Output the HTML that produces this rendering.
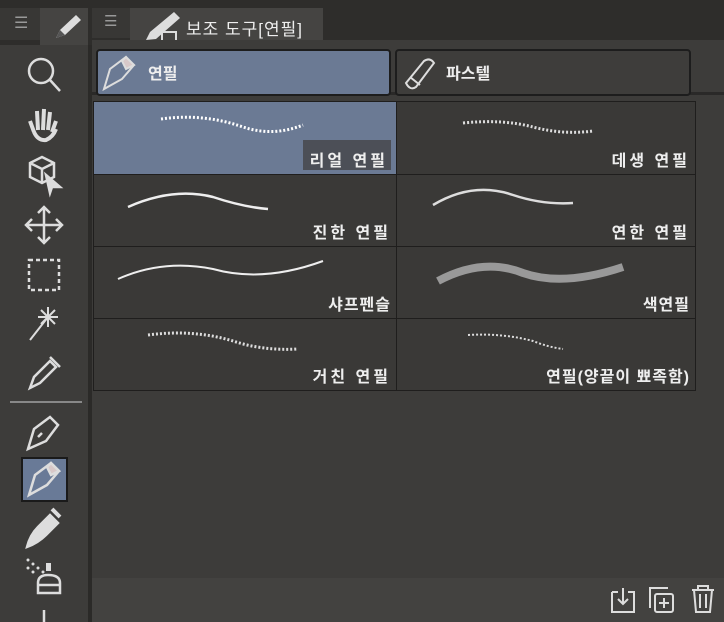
<!DOCTYPE html>
<html><head><meta charset="utf-8"><style>
*{margin:0;padding:0;box-sizing:border-box}
body{width:724px;height:622px;background:#2e2d2b;position:relative;overflow:hidden;font-family:"Liberation Sans","Noto Sans CJK KR",sans-serif;color:#e8e8e8}
.a{position:absolute}
.cell{position:absolute;background:#3a3937;border:1px solid #1f1e1d}
.lbl{position:absolute;right:6px;bottom:4px;font-size:16px;letter-spacing:3px;color:#eee;font-weight:bold}
</style></head><body>
<div class="a" style="left:0;top:8px;width:40px;height:32px;background:#383735"></div>
<div class="a" style="left:14px;top:13px;font-size:16px;color:#999">☰</div>
<div class="a" style="left:40px;top:8px;width:48px;height:37px;background:#454442"></div>
<svg class="a" style="left:52px;top:12px" width="34" height="30"><path d="M4 26 L8 18 L24 3 L29 8 L13 23 Z" fill="#ddd"/><path d="M4 26 L8 18 L13 23 Z" fill="#555"/></svg>
<div class="a" style="left:0;top:45px;width:90px;height:577px;background:#3d3c3a"></div>
<div class="a" style="left:88px;top:45px;width:4px;height:577px;background:#2b2a28"></div>
<svg class="a" style="left:0;top:45px" width="90" height="577" fill="none" stroke="#ddd" stroke-width="2.5">
<circle cx="41" cy="26" r="12"/><path d="M50 35 L60 46"/>
<path d="M34 87 L30 76 M38 85 L37 66 M43 85 L44 64 M48 85 L50 67 M52 87 L56 76 M34 87 Q38 96 46 95 Q53 92 56 84" stroke-width="4"/>
<path d="M30 118 L42 112 L54 118 L54 132 L42 138 L30 132 Z M30 118 L42 124 L54 118 M42 124 L42 138"/><path d="M46 130 L60 142 L52 142 L50 148 Z" fill="#ddd"/>
<path d="M44 162 L44 198 M26 180 L62 180 M38 168 L44 162 L50 168 M38 192 L44 198 L50 192 M32 174 L26 180 L32 186 M56 174 L62 180 L56 186"/>
<rect x="29" y="215" width="30" height="30" stroke-dasharray="4 3"/>
<path d="M30 295 L48 272 M48 262 L48 282 M38 272 L58 272 M41 265 L55 279 M55 265 L41 279" stroke-width="2"/>
<path d="M30 343 L34 332 L50 316 L56 322 L40 338 Z M50 312 L60 322"/>
<path d="M28 404 L34 384 L50 372 L58 380 L46 396 Z M38 392 L42 388"/>
<path d="M27 502 Q30 490 38 482 L50 470 L58 478 L46 490 Q38 498 27 502Z" fill="#ddd"/>
<path d="M52 464 L60 472" stroke-width="4"/>
<g fill="#ddd" stroke="none"><circle cx="28" cy="515" r="1.5"/><circle cx="33" cy="519" r="1.5"/><circle cx="28" cy="523" r="1.5"/><circle cx="38" cy="523" r="1.5"/><circle cx="33" cy="527" r="1.5"/><circle cx="43" cy="527" r="1.5"/><rect x="46" y="518" width="5" height="8"/></g>
<path d="M38 548 L38 538 Q38 530 48 530 Q60 530 60 538 L60 548 Z M38 540 L60 540"/>
<path d="M44 565 L44 577"/>
</svg>
<div class="a" style="left:10px;top:401px;width:72px;height:2px;background:#888"></div>
<div class="a" style="left:21px;top:457px;width:47px;height:45px;background:#697a97;border:2px solid #1a1a1a"></div>
<svg class="a" style="left:21px;top:457px" width="47" height="45" fill="none" stroke="#ddd" stroke-width="2.5"><path d="M8 38 L14 18 L30 6 L38 14 L26 28 Z"/><path d="M30 6 L38 14 L30 18 L26 10Z" fill="#d8c8c8"/></svg>
<div class="a" style="left:92px;top:8px;width:38px;height:30px;background:#383735"></div>
<div class="a" style="left:104px;top:12px;font-size:15px;color:#999">☰</div>
<div class="a" style="left:130px;top:8px;width:193px;height:32px;background:#454442"></div>
<svg class="a" style="left:144px;top:10px" width="40" height="36"><path d="M2 30 L6 22 L30 2 L36 8 L12 29 Z" fill="#ddd"/><rect x="18" y="22" width="14" height="10" fill="none" stroke="#ddd" stroke-width="2"/></svg>
<div class="a" style="left:186px;top:15px;font-size:17px;letter-spacing:1px;color:#eee">보조 도구[연필]</div>
<div class="a" style="left:92px;top:40px;width:632px;height:582px;background:#3d3c3a"></div>
<div class="a" style="left:92px;top:92px;width:632px;height:3px;background:#2a2928"></div>
<div class="a" style="left:96px;top:49px;width:295px;height:47px;background:#6b7a94;border:2px solid #1d1d1d;border-radius:4px"></div>
<svg class="a" style="left:100px;top:51px" width="40" height="44" fill="none" stroke="#ddd" stroke-width="2"><path d="M4 38 L10 18 L26 6 L34 14 L22 28 Z"/><path d="M26 6 L34 14 L26 18 L22 10Z" fill="#d8c8c8"/></svg>
<div class="a" style="left:148px;top:60px;font-size:16px;color:#eee;font-weight:bold">연필</div>
<div class="a" style="left:395px;top:49px;width:296px;height:47px;background:#3e3d3b;border:2px solid #1d1d1d;border-radius:4px"></div>
<svg class="a" style="left:400px;top:53px" width="40" height="40" fill="none" stroke="#ddd" stroke-width="2"><path d="M6 30 L24 8 Q30 4 34 10 L16 34 Q10 38 6 30Z M10 24 L20 32"/></svg>
<div class="a" style="left:446px;top:60px;font-size:16px;color:#eee;font-weight:bold">파스텔</div>
<div class="cell" style="left:93px;top:101px;width:304px;height:74px;background:#6b7a94"></div>
<div class="cell" style="left:396px;top:101px;width:300px;height:74px"></div>
<div class="cell" style="left:93px;top:174px;width:304px;height:73px"></div>
<div class="cell" style="left:396px;top:174px;width:300px;height:73px"></div>
<div class="cell" style="left:93px;top:246px;width:304px;height:73px"></div>
<div class="cell" style="left:396px;top:246px;width:300px;height:73px"></div>
<div class="cell" style="left:93px;top:318px;width:304px;height:73px"></div>
<div class="cell" style="left:396px;top:318px;width:300px;height:73px"></div>
<svg class="a" style="left:93px;top:101px" width="604" height="290" fill="none">
<path d="M68 18 Q110 12 150 26 Q180 36 210 24" stroke="#fff" stroke-width="3" stroke-dasharray="2 2"/>
<path d="M370 22 Q410 18 440 26 Q470 34 500 30" stroke="#ddd" stroke-width="3" stroke-dasharray="2 2"/>
<path d="M35 106 Q80 86 120 96 Q150 106 175 108" stroke="#eee" stroke-width="2.5"/>
<path d="M340 104 Q380 80 420 94 Q450 104 480 102" stroke="#ddd" stroke-width="2.5"/>
<path d="M25 178 Q70 158 120 168 Q170 182 230 160" stroke="#eee" stroke-width="2"/>
<path d="M345 180 Q390 156 430 172 Q470 186 530 166" stroke="#999" stroke-width="8"/>
<path d="M55 234 Q100 228 140 240 Q170 250 205 248" stroke="#ddd" stroke-width="3" stroke-dasharray="2 2"/>
<path d="M375 234 Q410 232 440 240 Q455 246 470 248" stroke="#ddd" stroke-width="2" stroke-dasharray="2 2"/>
</svg>
<div class="a" style="left:303px;top:140px;width:88px;height:30px;background:#4c4f57"></div>
<div class="a" style="left:93px;top:101px;width:301px;height:74px"><span class="lbl">리얼 연필</span></div>
<div class="a" style="left:396px;top:101px;width:300px;height:74px"><span class="lbl">데생 연필</span></div>
<div class="a" style="left:93px;top:174px;width:304px;height:73px"><span class="lbl">진한 연필</span></div>
<div class="a" style="left:396px;top:174px;width:300px;height:73px"><span class="lbl">연한 연필</span></div>
<div class="a" style="left:93px;top:246px;width:304px;height:73px"><span class="lbl" style="letter-spacing:1px">샤프펜슬</span></div>
<div class="a" style="left:396px;top:246px;width:300px;height:73px"><span class="lbl" style="letter-spacing:1px">색연필</span></div>
<div class="a" style="left:93px;top:318px;width:304px;height:73px"><span class="lbl">거친 연필</span></div>
<div class="a" style="left:396px;top:318px;width:300px;height:73px"><span class="lbl" style="letter-spacing:1px">연필(양끝이 뾰족함)</span></div>
<div class="a" style="left:92px;top:578px;width:632px;height:44px;background:#434240"></div>
<svg class="a" style="left:600px;top:580px" width="124" height="42" fill="none" stroke="#ddd" stroke-width="2">
<path d="M12 12 L12 32 L34 32 L34 12 L28 12 M18 12 L12 12 M23 8 L23 24 M18 19 L23 24 L28 19"/>
<rect x="55" y="14" width="18" height="18" rx="2"/><path d="M50 28 L50 8 L68 8"/><path d="M64 18 L64 28 M59 23 L69 23"/>
<path d="M92 10 L114 10 M98 10 L98 6 L108 6 L108 10 M94 10 L96 32 L110 32 L112 10 M100 14 L100 28 M106 14 L106 28"/>
</svg>
</body></html>
